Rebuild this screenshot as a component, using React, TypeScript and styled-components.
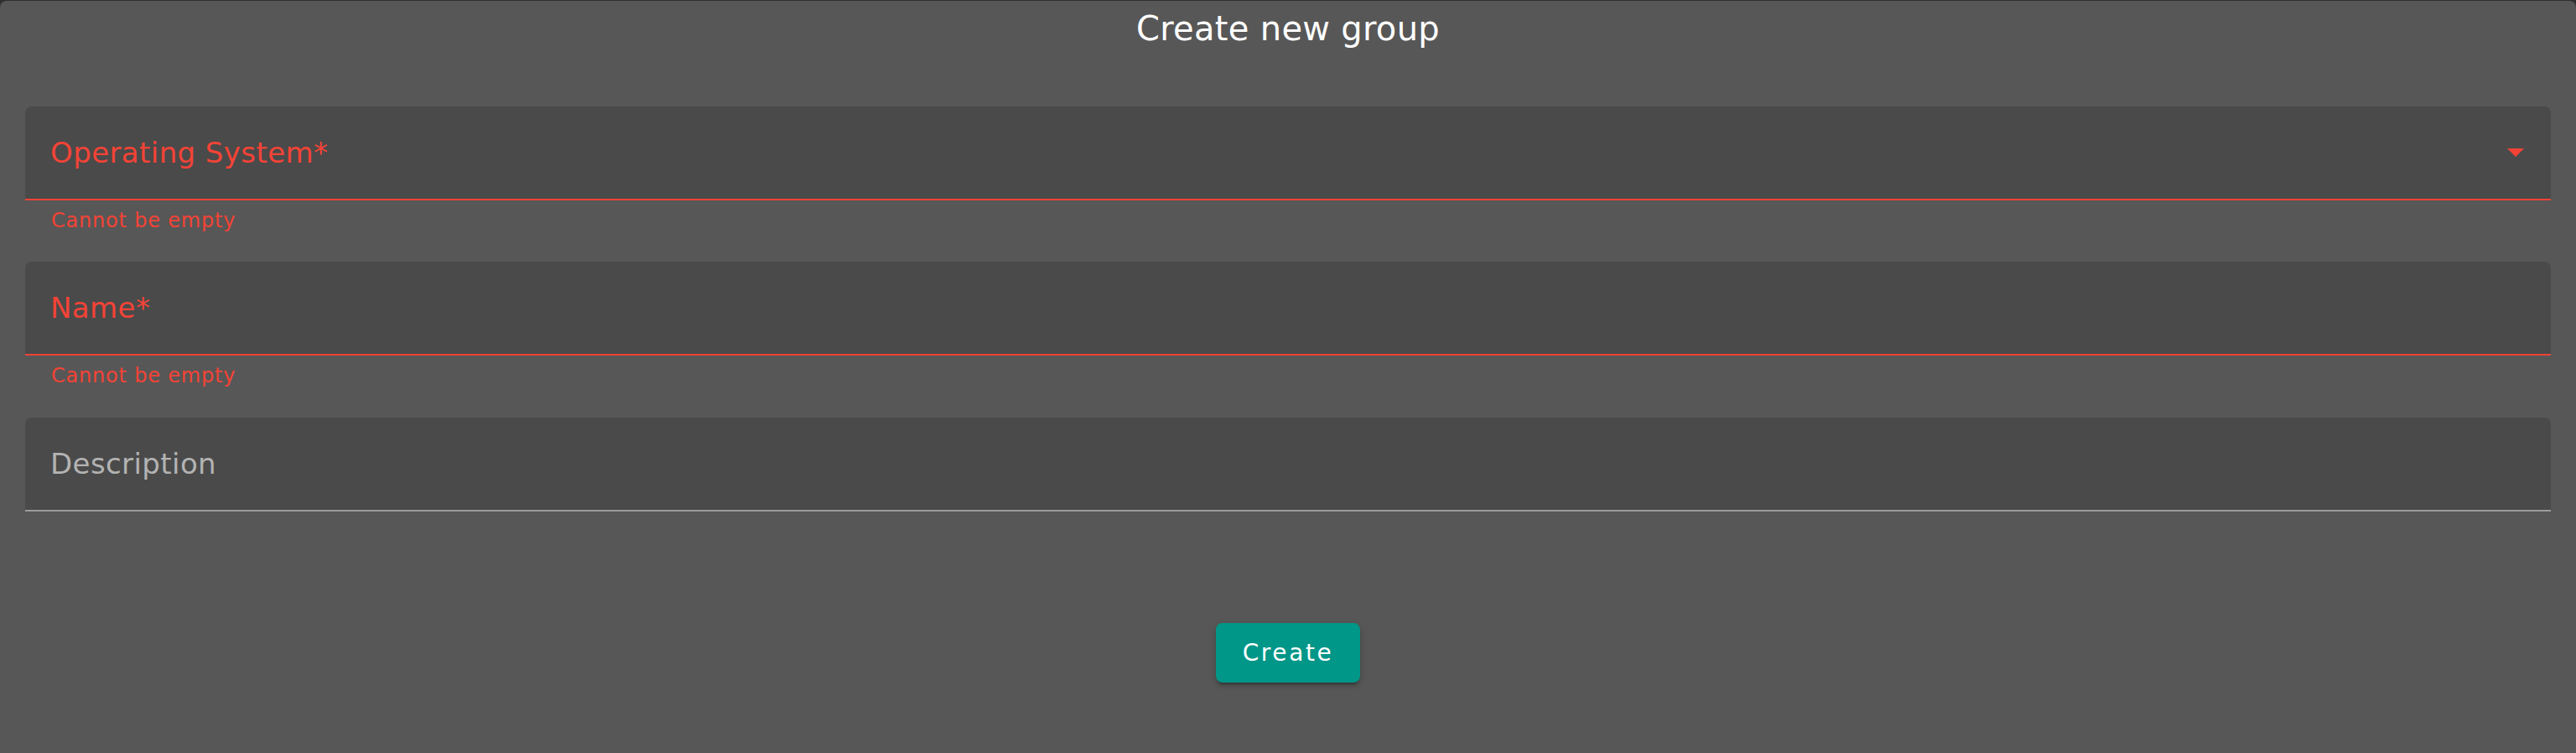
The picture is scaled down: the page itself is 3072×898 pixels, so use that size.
import React from 'react'
import styled, { createGlobalStyle } from 'styled-components'

const GlobalStyle = createGlobalStyle`
  html, body {
    margin: 0;
    padding: 0;
    background: #2f2f2f;
    font-family: "DejaVu Sans", "Liberation Sans", sans-serif;
    overflow: hidden;
  }
`

const Dialog = styled.div`
  margin-top: 1px;
  height: 897px;
  box-sizing: border-box;
  background: #575757;
  border-radius: 8px 8px 0 0;
  padding: 0 30px;
  display: flex;
  flex-direction: column;
`

const Title = styled.h2`
  margin: 0;
  padding-top: 1px;
  text-align: center;
  font-size: 40px;
  line-height: 64px;
  font-weight: 400;
  letter-spacing: 0.3px;
  color: #fff;
`

const Form = styled.form`
  margin-top: 61px;
  display: flex;
  flex-direction: column;
`

const Group = styled.div<{ $gap: number }>`
  display: flex;
  flex-direction: column;
  margin-bottom: ${(p) => p.$gap}px;
`

const Field = styled.div<{ $error?: boolean }>`
  height: 110px;
  display: flex;
  align-items: center;
  padding: 0 32px 0 30px;
  background: #4a4a4a;
  border-radius: 8px 8px 0 0;
  border-bottom: 2px solid ${(p) => (p.$error ? '#f44336' : '#9c9c9c')};
`

const Label = styled.span<{ $error?: boolean }>`
  flex: 1;
  font-size: 34px;
  letter-spacing: 0.4px;
  color: ${(p) => (p.$error ? '#f44336' : '#b3b3b3')};
`

const Helper = styled.p`
  margin: 4px 0 0;
  padding-left: 31px;
  font-size: 24px;
  line-height: 40px;
  letter-spacing: 0.8px;
  color: #f44336;
`

const Actions = styled.div`
  margin-top: 133px;
  display: flex;
  justify-content: center;
`

const Button = styled.button`
  border: 0;
  border-radius: 8px;
  padding: 12px 32px;
  line-height: 47px;
  font-family: inherit;
  font-size: 28px;
  letter-spacing: 2.6px;
  color: #fff;
  background: #009688;
  box-shadow: 0 6px 2px -4px rgba(0, 0, 0, 0.2), 0 4px 4px 0 rgba(0, 0, 0, 0.14), 0 2px 10px 0 rgba(0, 0, 0, 0.12);
  cursor: pointer;
`

const Arrow = () => (
  <svg width="20" height="10" viewBox="0 0 20 10">
    <polygon points="0,0 20,0 10,10" fill="#f44336" />
  </svg>
)

const App = () => {
  return (
    <>
      <GlobalStyle />
      <Dialog>
        <Title>Create new group</Title>
        <Form onSubmit={(e) => e.preventDefault()}>
          <Group $gap={29}>
            <Field $error>
              <Label $error>Operating System*</Label>
              <Arrow />
            </Field>
            <Helper>Cannot be empty</Helper>
          </Group>
          <Group $gap={30}>
            <Field $error>
              <Label $error>Name*</Label>
            </Field>
            <Helper>Cannot be empty</Helper>
          </Group>
          <Group $gap={0}>
            <Field>
              <Label>Description</Label>
            </Field>
          </Group>
          <Actions>
            <Button type="submit">Create</Button>
          </Actions>
        </Form>
      </Dialog>
    </>
  )
}

export default App
